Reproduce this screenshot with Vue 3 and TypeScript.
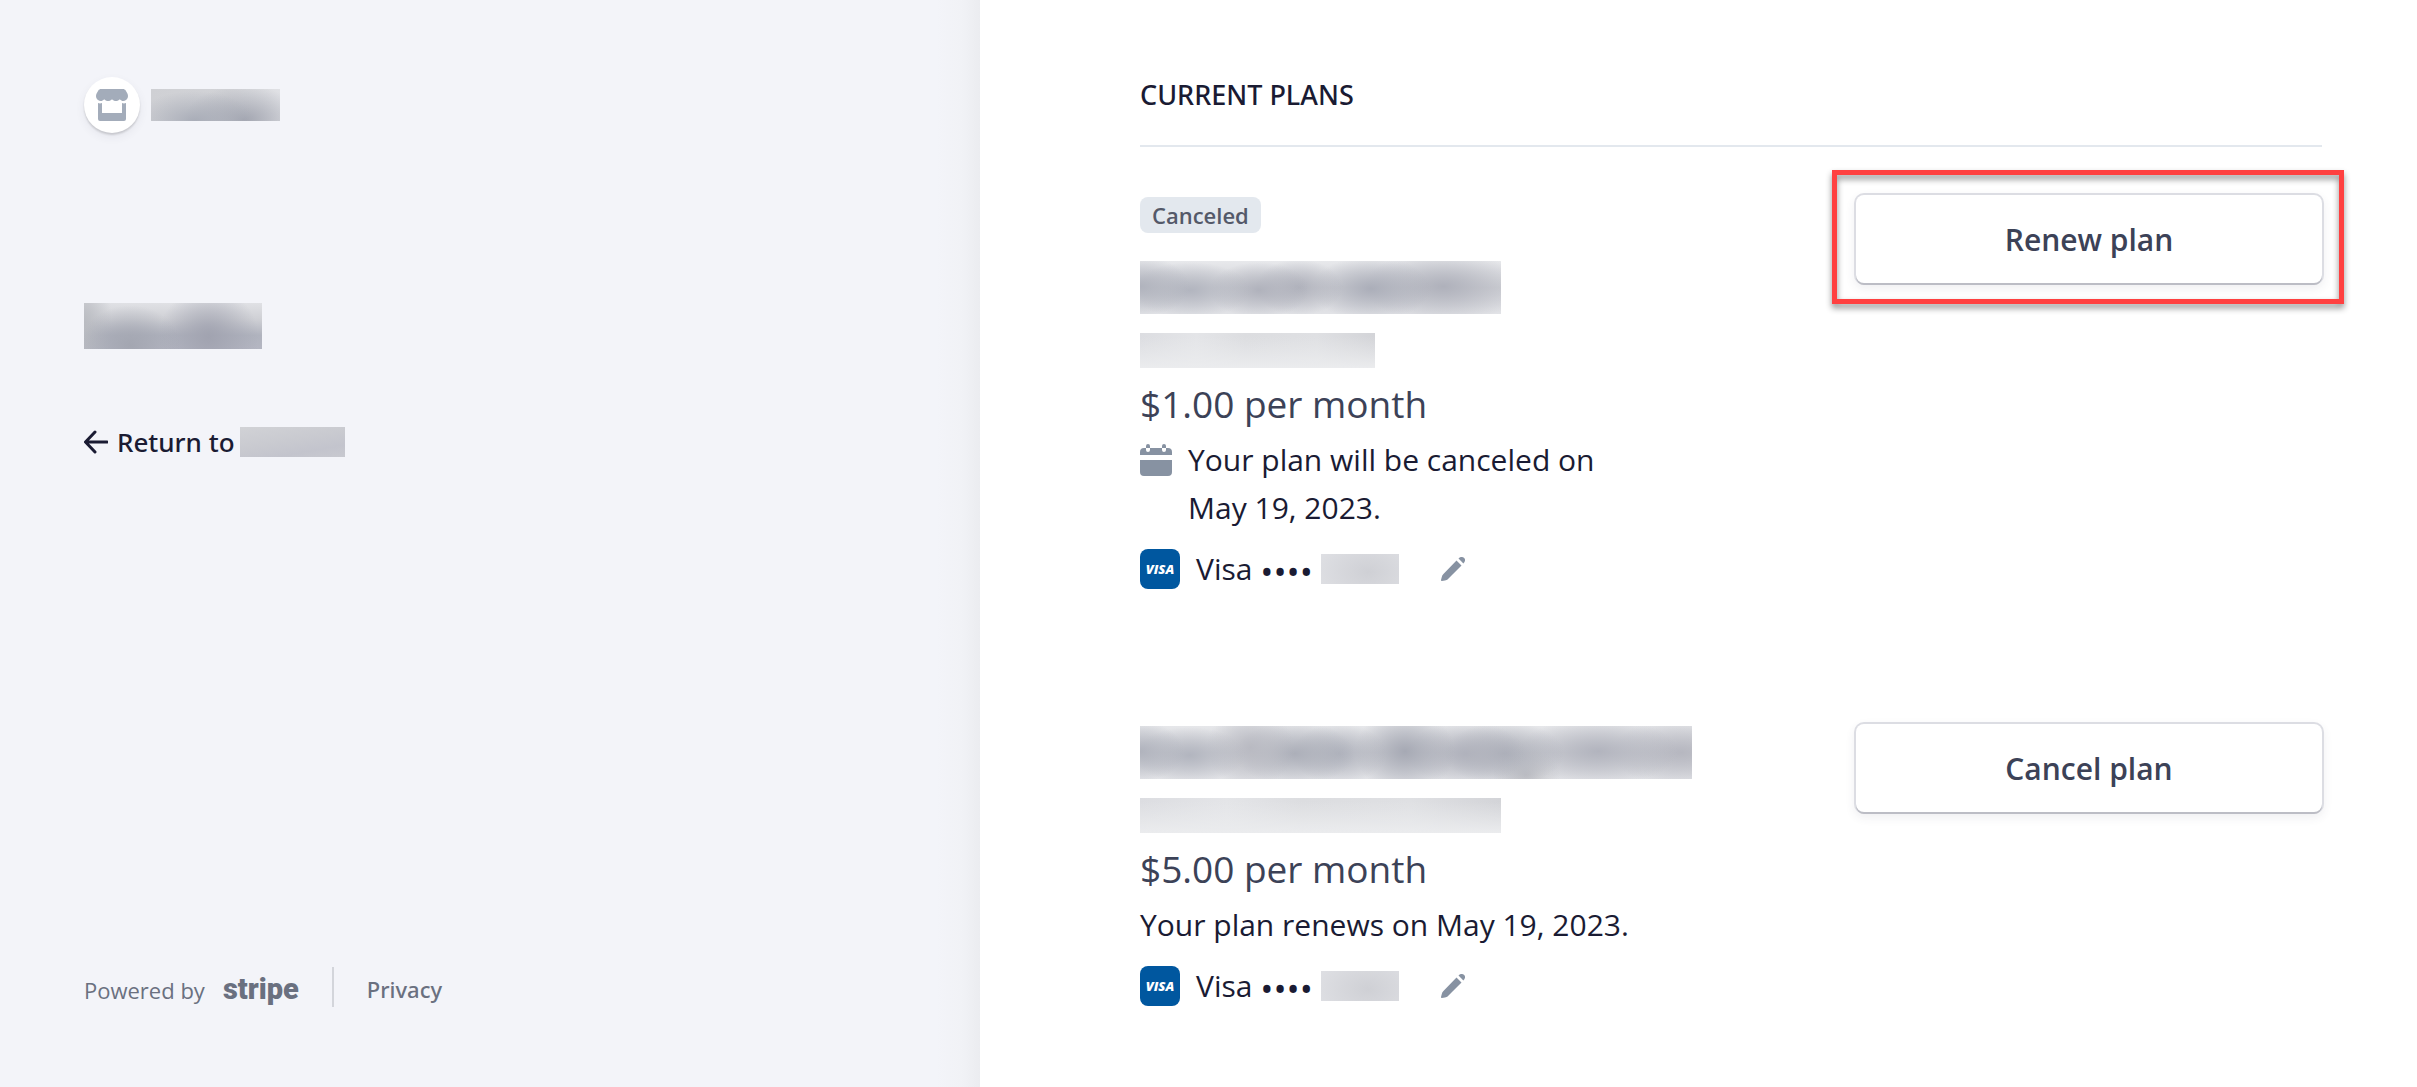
<script setup lang="ts">
interface Plan {
  id: string
  badge?: string
  price: string
  status: string
  scheduled: boolean
  action: string
  highlighted: boolean
}

const plans: Plan[] = [
  {
    id: 'first',
    badge: 'Canceled',
    price: '$1.00 per month',
    status: 'Your plan will be canceled on May 19, 2023.',
    scheduled: true,
    action: 'Renew plan',
    highlighted: true,
  },
  {
    id: 'second',
    price: '$5.00 per month',
    status: 'Your plan renews on May 19, 2023.',
    scheduled: false,
    action: 'Cancel plan',
    highlighted: false,
  },
]
</script>

<template>
  <div class="portal">
    <aside class="side">
      <div class="brand">
        <span class="brand-mark">
          <svg viewBox="0 0 32 32" width="32" height="32" aria-hidden="true">
            <path d="M5 0h22c1 0 2 .5 2.700 1.500l1.700 3c1.200 2.500.5 5-1.400 6.500-2 1.500-4.500 1.200-6.200-.8-1.800 2.300-5.800 2.500-7.800 0-2 2.500-6 2.300-7.800 0-1.700 2-4.200 2.300-6.200.8C.1 9.500-.6 7 .6 4.500l1.700-3C3 .5 4 0 5 0z" />
            <path d="M2 14c1.300.6 2.700.6 4 0v10h20V14c1.300.6 2.700.6 4 0v16a2 2 0 0 1-2 2H4a2 2 0 0 1-2-2z" />
          </svg>
        </span>
        <span class="redacted brand-name"></span>
      </div>
      <div class="redacted account-name"></div>
      <a class="return" href="#">
        <svg viewBox="0 0 24 24" width="24" height="24" aria-hidden="true">
          <path d="M11 2 1.500 12 11 22M2 12h21" fill="none" stroke="currentColor" stroke-width="3" stroke-linecap="round" stroke-linejoin="round" />
        </svg>
        <span class="return-text">Return to</span>
        <span class="redacted return-name"></span>
      </a>
      <footer class="foot">
        <a class="powered" href="#">Powered by <span class="stripe">stripe</span></a>
        <span class="rule"></span>
        <a class="privacy" href="#">Privacy</a>
      </footer>
    </aside>

    <main class="main">
      <h1 class="heading">CURRENT PLANS</h1>
      <article v-for="plan in plans" :key="plan.id" class="plan" :class="plan.id">
        <div class="details">
          <span v-if="plan.badge" class="badge">{{ plan.badge }}</span>
          <div class="redacted title"></div>
          <div class="redacted subtitle"></div>
          <p class="price">{{ plan.price }}</p>
          <p class="status">
            <svg v-if="plan.scheduled" class="calendar" viewBox="0 0 32 32" width="32" height="32" aria-hidden="true">
              <path d="M0 11V8a4 4 0 0 1 4-4h2v2a2 2 0 0 0 4 0V4h12v2a2 2 0 0 0 4 0V4h2a4 4 0 0 1 4 4v3zM0 16h32v12a4 4 0 0 1-4 4H4a4 4 0 0 1-4-4z" />
              <path d="M6 4V2a2 2 0 0 1 4 0v2zM22 4V2a2 2 0 0 1 4 0v2z" />
            </svg>
            <span>{{ plan.status }}</span>
          </p>
          <div class="payment">
            <span class="visa" aria-hidden="true">VISA</span>
            <span class="card">Visa <span class="dots">••••</span></span>
            <span class="redacted digits"></span>
            <button class="edit" type="button" aria-label="Edit payment method">
              <svg viewBox="0 0 24 24" width="24" height="24" aria-hidden="true">
                <path d="M15.500 3.500 20.500 8.500 7 22c-1 1-2 1.300-3 1.400L.8 24c-.6 0-.9-.3-.8-.9L.8 20c.2-1 .6-2 1.400-2.800z" />
                <path d="M17.500 1.500C19.500-.5 22-.3 23.200 1s1.300 3.600-.8 5.500z" />
              </svg>
            </button>
          </div>
        </div>
        <div class="action">
          <button class="action-button" type="button">{{ plan.action }}</button>
          <span v-if="plan.highlighted" class="highlight"></span>
        </div>
      </article>
    </main>
  </div>
</template>

<style>
body {
  margin: 0;
  background: #fff;
}
</style>

<style scoped>
.portal {
  display: grid;
  grid-template-columns: 980fr 1437fr;
  min-height: 100vh;
  font-family: "Open Sans", "Noto Sans", sans-serif;
  font-size: 30px;
  color: #1a1b33;
}

a {
  color: inherit;
  text-decoration: none;
}

.redacted {
  display: block;
  flex: none;
}

.side {
  display: flex;
  flex-direction: column;
  box-sizing: border-box;
  padding: 77px 84px 75px;
  background: linear-gradient(to left, #ebecf0 0, #f1f2f6 18px, #f3f4f9 44px);
}

.brand {
  display: flex;
  align-items: center;
  gap: 11px;
}

.brand-mark {
  display: flex;
  align-items: center;
  justify-content: center;
  width: 56px;
  height: 56px;
  border-radius: 50%;
  background: #fff;
  fill: #a3acba;
  box-shadow: 0 2px 2px rgba(0, 0, 0, 0.14), 0 4px 10px rgba(60, 66, 87, 0.08);
}

.brand-name {
  width: 129px;
  height: 32px;
  background:
    radial-gradient(ellipse 60px 30px at 34% 100%, #a9adb8, transparent),
    radial-gradient(ellipse 60px 34px at 72% 96%, #a3a6b1, transparent),
    linear-gradient(to right, #cfd0d4, #d2d3d7 60%, #e0e1e5);
}

.account-name {
  width: 178px;
  height: 46px;
  margin-top: 170px;
  background:
    radial-gradient(ellipse 50px 40px at 26% 92%, #a3a6b1, transparent),
    radial-gradient(ellipse 50px 50px at 70% 74%, #a1a3b0, transparent),
    radial-gradient(ellipse 28px 70px at 0 50%, #b9bbc1, transparent),
    linear-gradient(#e0e1e5, #cfd0d5 35%, #b0b3be 70%, #b4b6c2);
}

.return {
  display: flex;
  align-items: center;
  margin-top: 73px;
  font-family: "Noto Sans", "Open Sans", sans-serif;
  font-size: 26px;
  font-weight: 500;
  line-height: 40px;
}

.return-text {
  margin: 0 5px 0 9px;
}

.return-name {
  width: 105px;
  height: 30px;
  background: linear-gradient(170deg, #d1d2d6, #c9cad0 45%, #c3c4cd 75%, #c8c9d0);
}

.foot {
  display: flex;
  align-items: flex-start;
  margin-top: auto;
  font-size: 22px;
  line-height: 44px;
  color: #6a7080;
}

.powered {
  display: flex;
  align-items: baseline;
  gap: 18px;
}

.stripe {
  font-family: Roboto, sans-serif;
  font-size: 29px;
  font-weight: 900;
}

.rule {
  width: 2px;
  height: 40px;
  margin: 0 33px;
  background: #d3d5db;
}

.privacy {
  font-family: "Noto Sans", "Open Sans", sans-serif;
  font-weight: 500;
}

.main {
  box-sizing: border-box;
  padding: 75px 95px 40px 160px;
}

.heading {
  margin: 0 0 48px;
  padding-bottom: 30px;
  border-bottom: 2px solid #e3e8ee;
  font-family: "Noto Sans", "Open Sans", sans-serif;
  font-size: 27px;
  font-weight: 500;
  line-height: 40px;
}

.plan {
  display: flex;
  align-items: flex-start;
  justify-content: space-between;
}

.plan + .plan {
  margin-top: 131px;
}

.details {
  padding-top: 2px;
}

.badge {
  display: block;
  width: fit-content;
  margin-bottom: 28px;
  padding: 0 12px;
  border-radius: 8px;
  background: #e3e8ee;
  color: #545969;
  font-size: 22px;
  font-weight: 600;
  line-height: 36px;
}

.title {
  width: 361px;
  height: 53px;
  background:
    radial-gradient(ellipse 50px 30px at 0 48%, #b0b3bd, transparent),
    radial-gradient(ellipse 60px 28px at 14% 55%, #b2b5bf, transparent),
    radial-gradient(ellipse 50px 28px at 33% 55%, #b0b2bc, transparent),
    radial-gradient(ellipse 44px 28px at 44% 50%, #b0b2bc, transparent),
    radial-gradient(ellipse 60px 32px at 64% 52%, #abaeb9, transparent),
    radial-gradient(ellipse 80px 36px at 84% 48%, #afb1bb, transparent),
    linear-gradient(#e8e9ec, #d0d1d6 50%, #e2e3e7);
}

.subtitle {
  width: 235px;
  height: 35px;
  margin-top: 19px;
  background:
    linear-gradient(to bottom, transparent 10%, #ebecee),
    linear-gradient(to right, #dcdde1, #e4e5e8 24%, #dcdde0 45%, #dfe0e3 75%, #d3d4d8);
}

.second .title {
  width: 552px;
  background:
    radial-gradient(ellipse 44px 30px at 0 48%, #b0b3bd, transparent),
    radial-gradient(ellipse 56px 28px at 9% 55%, #b2b5bf, transparent),
    radial-gradient(ellipse 44px 40px at 20% 42%, #b9bac2, transparent),
    radial-gradient(ellipse 60px 32px at 28% 52%, #acafb9, transparent),
    radial-gradient(ellipse 48px 30px at 36% 52%, #b0b3bd, transparent),
    radial-gradient(ellipse 50px 42px at 48% 48%, #a6a9b4, transparent),
    radial-gradient(ellipse 60px 32px at 59% 52%, #b0b2bc, transparent),
    radial-gradient(ellipse 60px 32px at 66% 52%, #abaeb8, transparent),
    radial-gradient(ellipse 34px 26px at 70% 92%, #bfc0c5, transparent),
    radial-gradient(ellipse 80px 34px at 83% 48%, #b2b4be, transparent),
    radial-gradient(ellipse 70px 34px at 98% 50%, #b6b7c0, transparent),
    linear-gradient(#e6e7ea, #cfd0d5 50%, #e2e3e7);
}

.second .subtitle {
  width: 361px;
}

.price {
  margin: 12px 0 8px;
  color: #3c4257;
  font-size: 37px;
  line-height: 48px;
}

.status {
  display: flex;
  align-items: flex-start;
  gap: 16px;
  max-width: 500px;
  margin: 0 0 13px;
  line-height: 48px;
}

.calendar {
  flex: none;
  margin-top: 8px;
  fill: #8792a2;
}

.payment {
  display: flex;
  align-items: center;
  height: 48px;
}

.visa {
  width: 40px;
  border-radius: 8px;
  background: #00579f;
  color: #fff;
  font-size: 13px;
  font-style: italic;
  font-weight: 800;
  line-height: 40px;
  text-align: center;
}

.card {
  margin: 0 8px 0 16px;
  line-height: 48px;
}

.dots {
  font-size: 35px;
  line-height: 30px;
  vertical-align: middle;
}

.digits {
  width: 78px;
  height: 30px;
  background: radial-gradient(ellipse 60px 40px at 60% 60%, #cfd0d5, #e0e1e5);
}

.edit {
  display: flex;
  margin-left: 42px;
  padding: 0;
  border: 0;
  background: none;
  fill: #8792a2;
}

.action {
  position: relative;
  flex: 0 0 466px;
}

.action-button {
  display: block;
  width: 100%;
  height: 88px;
  padding: 0;
  border: 0;
  border-radius: 8px;
  background: #fff;
  box-shadow: 0 2px 0 0 #bcbdc5, 0 0 0 2px #dcdde3, 0 4px 10px 2px rgba(60, 66, 87, 0.08);
  color: #3c4257;
  font: inherit;
  font-weight: 600;
}

.highlight {
  position: absolute;
  inset: -25px -22px -21px -24px;
  border: 5px solid #ff4040;
  filter: drop-shadow(0 4px 3px rgba(0, 0, 0, 0.45));
  pointer-events: none;
}
</style>
